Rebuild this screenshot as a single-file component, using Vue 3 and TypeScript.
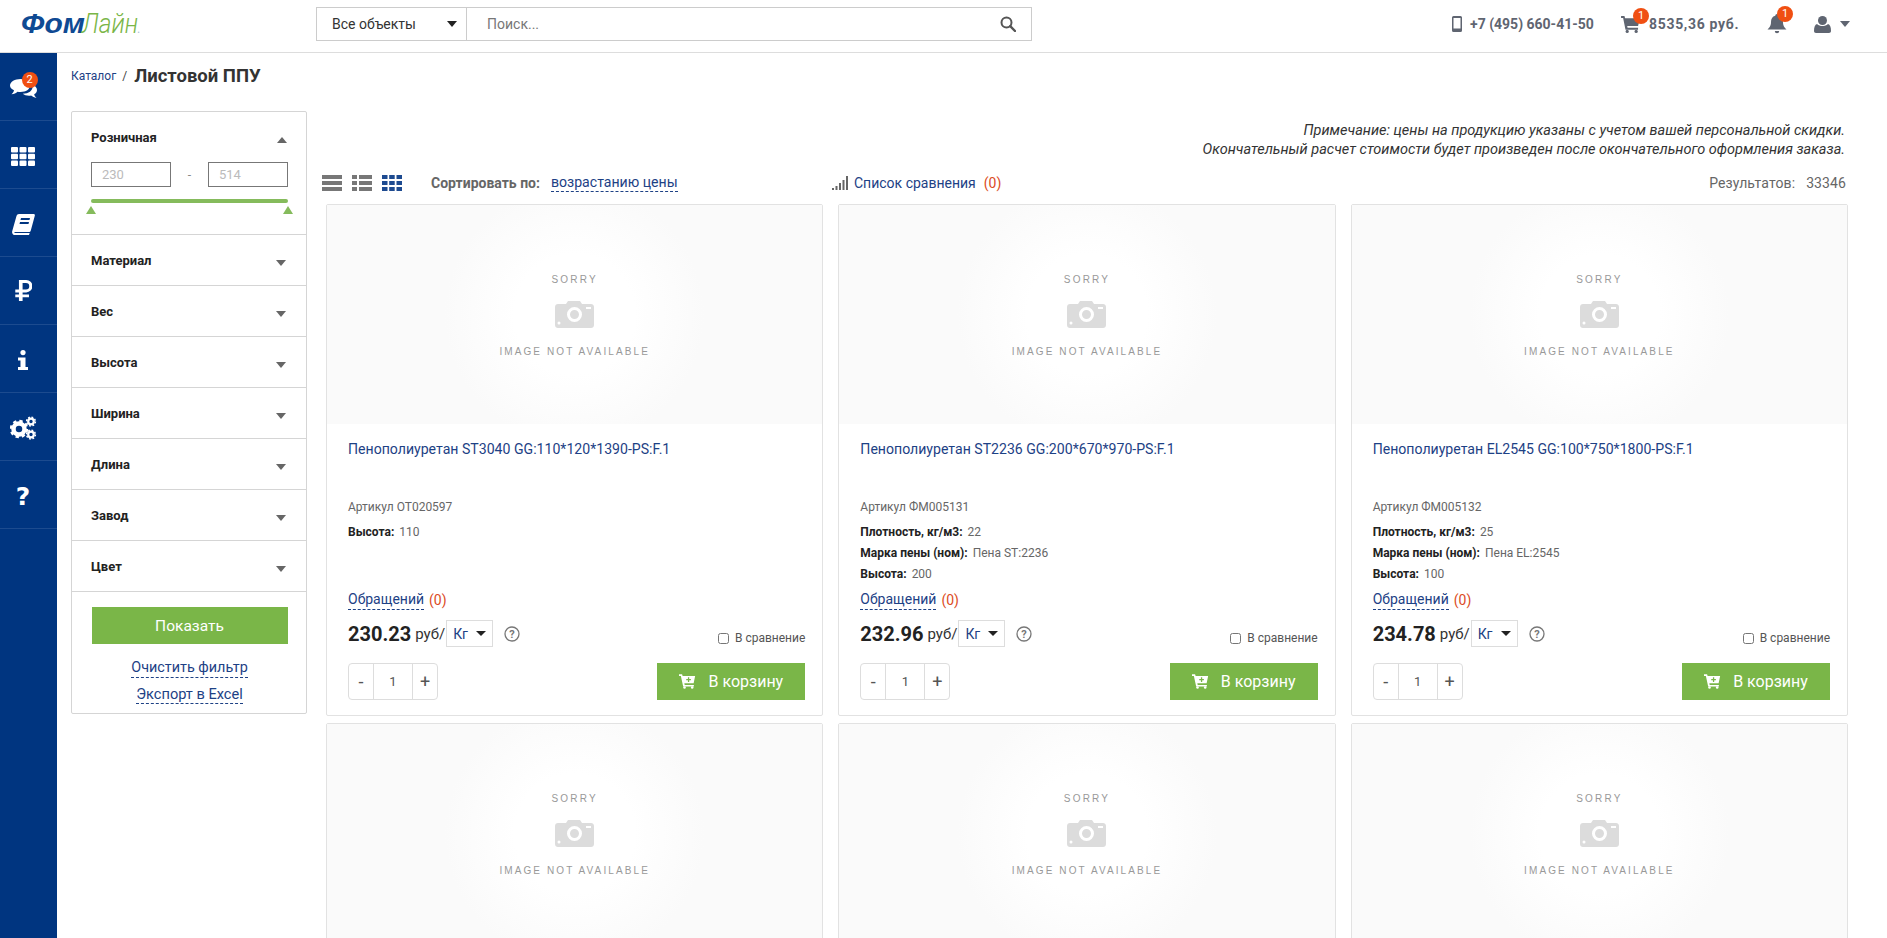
<script setup lang="ts">
interface Spec { label: string; value: string }
interface Product { title: string; sku: string; specs: Spec[]; price: string }

const filters: string[] = ['Материал', 'Вес', 'Высота', 'Ширина', 'Длина', 'Завод', 'Цвет']
const products: Product[] = [
  { title: 'Пенополиуретан ST3040 GG:110*120*1390-PS:F.1', sku: 'Артикул ОТ020597', price: '230.23',
    specs: [{ label: 'Высота:', value: '110' }] },
  { title: 'Пенополиуретан ST2236 GG:200*670*970-PS:F.1', sku: 'Артикул ФМ005131', price: '232.96',
    specs: [{ label: 'Плотность, кг/м3:', value: '22' }, { label: 'Марка пены (ном):', value: 'Пена ST:2236' }, { label: 'Высота:', value: '200' }] },
  { title: 'Пенополиуретан EL2545 GG:100*750*1800-PS:F.1', sku: 'Артикул ФМ005132', price: '234.78',
    specs: [{ label: 'Плотность, кг/м3:', value: '25' }, { label: 'Марка пены (ном):', value: 'Пена EL:2545' }, { label: 'Высота:', value: '100' }] }
]
const placeholders: number[] = [1, 2, 3]
</script>

<template>
  <div class="page">
    <header class="topbar">
      <div class="logo"><span class="logo-a">Фом</span><span class="logo-b">Лайн</span><span class="logo-dot">.</span></div>
      <div class="search">
        <div class="search-select"><span>Все объекты</span><i class="caret dark"></i></div>
        <input class="search-input" placeholder="Поиск..." />
        <svg class="search-icon" viewBox="0 0 16 16"><circle cx="6.5" cy="6.5" r="5" fill="none" stroke="#555" stroke-width="2" /><path d="M10.2 10.2 15 15" stroke="#555" stroke-width="2.4" stroke-linecap="round" /></svg>
      </div>
      <div class="top-right">
        <svg class="ic-phone" viewBox="0 0 10 16"><path fill-rule="evenodd" d="M1.5 0h7A1.5 1.5 0 0 1 10 1.5v13A1.5 1.5 0 0 1 8.500 16h-7A1.500 1.500 0 0 1 0 14.500v-13A1.500 1.500 0 0 1 1.500 0zM1.500 2v10.500h7V2z" fill="#5f6571" /></svg>
        <span class="tel">+7 (495) 660-41-50</span>
        <span class="icon-wrap cart">
          <svg viewBox="0 0 20 18"><path d="M0 0h3.600l.7 2.500H20l-2 8H6.500l.4 2H18v2H4.700L2.200 2H0z" fill="#5f6571" /><circle cx="6.500" cy="16.300" r="1.700" fill="#5f6571" /><circle cx="16" cy="16.300" r="1.700" fill="#5f6571" /></svg>
          <b class="badge">1</b>
        </span>
        <span class="sum">8535,36 руб.</span>
        <span class="icon-wrap bell">
          <svg viewBox="0 0 20 20"><path d="M10 0a1.700 1.700 0 0 1 1.700 1.800C14.700 2.500 16 5 16 8c0 4 1.500 5.500 3.500 7.500H.5C2.500 13.500 4 12 4 8c0-3 1.300-5.500 4.300-6.200A1.700 1.700 0 0 1 10 0zM7.800 17h4.400a2.200 2.200 0 0 1-4.400 0z" fill="#5f6571" /></svg>
          <b class="badge">1</b>
        </span>
        <svg class="ic-user" viewBox="0 0 17 17"><circle cx="8.500" cy="4.500" r="4.500" fill="#5f6571" /><path d="M3 8c1.500 1.500 3.500 2 5.500 2S12.500 9.500 14 8c2 .5 3 3 3 7 0 1.300-.8 2-2 2H2c-1.200 0-2-.7-2-2 0-4 1-6.500 3-7z" fill="#5f6571" /></svg>
        <i class="caret grey"></i>
      </div>
    </header>

    <div class="body">
      <nav class="sidenav">
        <div class="nav-item first">
          <span class="nav-chat">
            <svg viewBox="0 0 27 20" width="27" height="20"><path d="M10.500 1C16 1 20 3.800 20 7.500S16 14 10.500 14c-1 0-2-.1-3-.3C6 15 4 16 1.500 16.300 3 15 3.800 13.800 4 12.300 1.500 11.200 0 9.500 0 7.500 0 3.800 5 1 10.500 1z" fill="#fff" /><path d="M22 6.500c3 1 5 3 5 5.500 0 1.800-1 3.300-2.800 4.300.2 1.300 1 2.500 2.300 3.700-2.200-.3-4-1.200-5.400-2.400-.8.100-1.300.2-2.100.2-2.500 0-4.800-.7-6.300-2 6 0 10-3 10-7.500z" fill="#fff" /></svg>
            <b class="badge nav-badge">2</b>
          </span>
        </div>
        <div class="nav-item">
          <svg viewBox="0 0 24 19" width="24" height="19"><g fill="#fff"><rect x="0" y="0" width="7" height="5.400" rx="1" /><rect x="8.500" y="0" width="7" height="5.400" rx="1" /><rect x="17" y="0" width="7" height="5.400" rx="1" /><rect x="0" y="6.800" width="7" height="5.400" rx="1" /><rect x="8.500" y="6.800" width="7" height="5.400" rx="1" /><rect x="17" y="6.800" width="7" height="5.400" rx="1" /><rect x="0" y="13.600" width="7" height="5.400" rx="1" /><rect x="8.500" y="13.600" width="7" height="5.400" rx="1" /><rect x="17" y="13.600" width="7" height="5.400" rx="1" /></g></svg>
        </div>
        <div class="nav-item">
          <svg viewBox="0 0 23 21" width="23" height="21"><path fill-rule="evenodd" d="M7 0h14.500c1 0 1.600.8 1.300 1.800l-4 14.700c-.3 1-1 1.500-2 1.500H3.500c-1 0-1.300.6-1.100 1h15.300L17 21H3c-2 0-3.300-1.700-2.800-3.700L4.500 2C4.800.8 5.800 0 7 0zm2 4-.5 2h9l.5-2zm-1 4-.5 2h9l.5-2z" fill="#fff" /></svg>
        </div>
        <div class="nav-item ruble">
          <svg viewBox="0 0 18 23" width="17" height="21"><path fill-rule="evenodd" d="M4 0h8a6.800 6.800 0 0 1 0 13.600H8v2.400h7v3H8v4H4v-4H0v-3h4v-2.400H0v-3.200h4zm4 3.200v7.200h3.700a3.600 3.600 0 0 0 0-7.200z" fill="#fff" /></svg>
        </div>
        <div class="nav-item">
          <svg viewBox="0 0 10 20" width="10" height="20"><circle cx="5" cy="2.600" r="2.600" fill="#fff" /><path d="M0 7.500h7.500V17H10v3H0v-3h2.500v-6.500H0z" fill="#fff" /></svg>
        </div>
        <div class="nav-item">
          <svg viewBox="0 0 27 24" width="27" height="24">
            <circle cx="9" cy="13" r="5.500" fill="none" stroke="#fff" stroke-width="4.500" />
            <circle cx="9" cy="13" r="8" fill="none" stroke="#fff" stroke-width="2.500" stroke-dasharray="3.300 3" />
            <circle cx="21" cy="5.500" r="2.800" fill="none" stroke="#fff" stroke-width="2.200" />
            <circle cx="21" cy="5.500" r="4.400" fill="none" stroke="#fff" stroke-width="1.500" stroke-dasharray="1.800 1.650" />
            <circle cx="21" cy="18.500" r="2.800" fill="none" stroke="#fff" stroke-width="2.200" />
            <circle cx="21" cy="18.500" r="4.400" fill="none" stroke="#fff" stroke-width="1.500" stroke-dasharray="1.800 1.650" />
          </svg>
        </div>
        <div class="nav-item"><span class="nav-q">?</span></div>
      </nav>

      <main class="main">
        <div class="crumbs"><a class="crumb">Каталог</a><span class="sep">/</span><h1 class="title">Листовой ППУ</h1></div>
        <div class="columns">
          <aside class="filter">
            <section class="f-open">
              <div class="f-head"><span>Розничная</span><i class="tri up"></i></div>
              <div class="range">
                <input class="range-in" placeholder="230" />
                <span class="dash">-</span>
                <input class="range-in" placeholder="514" />
              </div>
              <div class="slider"><i class="handle left"></i><i class="handle right"></i></div>
            </section>
            <section v-for="f in filters" :key="f" class="f-row"><span>{{ f }}</span><i class="tri down"></i></section>
            <div class="f-actions">
              <button class="show">Показать</button>
              <a class="dash-link clear">Очистить фильтр</a>
              <a class="dash-link excel">Экспорт в Excel</a>
            </div>
          </aside>

          <div class="content">
            <div class="note">
              <div>Примечание: цены на продукцию указаны с учетом вашей персональной скидки.</div>
              <div>Окончательный расчет стоимости будет произведен после окончательного оформления заказа.</div>
            </div>
            <div class="toolbar">
              <div class="views">
                <svg viewBox="0 0 20 16" width="20" height="16"><g fill="#777"><rect width="20" height="4" /><rect y="6" width="20" height="4" /><rect y="12" width="20" height="4" /></g></svg>
                <svg viewBox="0 0 20 16" width="20" height="16"><g fill="#777"><rect width="5" height="4" /><rect x="7" width="13" height="4" /><rect y="6" width="5" height="4" /><rect x="7" y="6" width="13" height="4" /><rect y="12" width="5" height="4" /><rect x="7" y="12" width="13" height="4" /></g></svg>
                <svg viewBox="0 0 20 16" width="20" height="16"><g fill="#1d4a90"><rect width="5.500" height="4" /><rect x="7.200" width="5.500" height="4" /><rect x="14.500" width="5.500" height="4" /><rect y="6" width="5.500" height="4" /><rect x="7.200" y="6" width="5.500" height="4" /><rect x="14.500" y="6" width="5.500" height="4" /><rect y="12" width="5.500" height="4" /><rect x="7.200" y="12" width="5.500" height="4" /><rect x="14.500" y="12" width="5.500" height="4" /></g></svg>
              </div>
              <div class="sort"><b>Сортировать по:</b><a class="dash-link">возрастанию цены</a></div>
              <div class="compare">
                <svg viewBox="0 0 16 14" width="16" height="14"><g fill="#666"><rect x="0" y="12" width="2" height="2" /><rect x="3.500" y="10" width="2" height="4" /><rect x="7" y="7" width="2" height="7" /><rect x="10.500" y="4" width="2" height="10" /><rect x="14" y="0" width="2" height="14" /></g></svg>
                <a class="link">Список сравнения</a><span class="count">(0)</span>
              </div>
              <div class="results"><span>Результатов:</span><span>33346</span></div>
            </div>

            <div class="grid">
              <article v-for="p in products" :key="p.sku" class="card">
                <div class="noimg">
                  <span class="ni-top">SORRY</span>
                  <svg class="ni-cam" viewBox="0 0 39 27"><path fill-rule="evenodd" d="M3 3h8l2-3h12l2 3h9c1.700 0 3 1.300 3 3v18c0 1.700-1.300 3-3 3H3c-1.700 0-3-1.300-3-3V6c0-1.700 1.300-3 3-3zm16.500 3a7.500 7.500 0 1 0 0 15 7.500 7.500 0 0 0 0-15zm0 3a4.500 4.500 0 1 1 0 9 4.500 4.500 0 0 1 0-9z" fill="#dcdcdc" /><rect x="31" y="6" width="5" height="2" fill="#fff" /><circle cx="4" cy="22" r="1.500" fill="#fff" /></svg>
                  <span class="ni-bot">IMAGE NOT AVAILABLE</span>
                </div>
                <div class="card-body">
                  <a class="p-title">{{ p.title }}</a>
                  <div class="sku">{{ p.sku }}</div>
                  <div class="specs">
                    <div v-for="s in p.specs" :key="s.label" class="spec"><b>{{ s.label }}</b><span>{{ s.value }}</span></div>
                  </div>
                  <div class="appeals"><a class="dash-link">Обращений</a><span class="count">(0)</span></div>
                  <div class="price-row">
                    <strong class="price">{{ p.price }}</strong>
                    <span class="per">руб/</span>
                    <div class="unit"><span>Кг</span><i class="caret dark small"></i></div>
                    <svg class="help" viewBox="0 0 16 16" width="16" height="16"><circle cx="8" cy="8" r="7" fill="none" stroke="#777" stroke-width="1.300" /><text x="8" y="11.800" text-anchor="middle" class="help-q">?</text></svg>
                    <label class="cmp"><input type="checkbox" /><span>В сравнение</span></label>
                  </div>
                  <div class="buy-row">
                    <div class="qty"><span class="q-btn">-</span><span class="q-val">1</span><span class="q-btn">+</span></div>
                    <button class="buy">
                      <svg viewBox="0 0 20 17" width="17" height="15"><path fill-rule="evenodd" d="M0 0h3.600l.7 2H19l-1.800 8.500H6.300l.4 2H17.500v2H4.900L2.200 2H0zM10.500 3.500v2h-2v1.500h2v2H12V7h2V5.500h-2v-2z" fill="#fff" /><circle cx="6.500" cy="15.500" r="1.500" fill="#fff" /><circle cx="15.500" cy="15.500" r="1.500" fill="#fff" /></svg>
                      <span>В корзину</span>
                    </button>
                  </div>
                </div>
              </article>
              <article v-for="n in placeholders" :key="n" class="card">
                <div class="noimg">
                  <span class="ni-top">SORRY</span>
                  <svg class="ni-cam" viewBox="0 0 39 27"><path fill-rule="evenodd" d="M3 3h8l2-3h12l2 3h9c1.700 0 3 1.300 3 3v18c0 1.700-1.300 3-3 3H3c-1.700 0-3-1.300-3-3V6c0-1.700 1.300-3 3-3zm16.500 3a7.500 7.500 0 1 0 0 15 7.500 7.500 0 0 0 0-15zm0 3a4.500 4.500 0 1 1 0 9 4.500 4.500 0 0 1 0-9z" fill="#dcdcdc" /><rect x="31" y="6" width="5" height="2" fill="#fff" /><circle cx="4" cy="22" r="1.500" fill="#fff" /></svg>
                  <span class="ni-bot">IMAGE NOT AVAILABLE</span>
                </div>
              </article>
            </div>
          </div>
        </div>
      </main>
    </div>
  </div>
</template>

<style>
html, body { margin: 0; padding: 0; background: #fff; overflow: hidden; }
</style>

<style scoped>
* { box-sizing: border-box; }
.page { height: 938px; overflow: hidden; font-family: Roboto, "Noto Sans", sans-serif; color: #333; font-size: 14px; display: flex; flex-direction: column; }
a { cursor: pointer; }

/* top bar */
.topbar { height: 53px; flex: none; border-bottom: 1px solid #ddd; display: flex; align-items: center; position: relative; }
.logo { width: 316px; padding-left: 21px; font-style: italic; font-size: 28px; line-height: 1; white-space: nowrap; margin-top: -5px; display: flex; align-items: baseline; }
.logo-a { width: 61px; font-family: "Liberation Sans", sans-serif; font-weight: 700; color: #0f4a93; display: inline-block; transform: scaleX(1.07); transform-origin: left; }
.logo-b { width: 54px; font-family: Roboto, sans-serif; font-weight: 300; color: #7ab648; display: inline-block; transform: scaleX(.875); transform-origin: left; }
.logo-dot { color: #a9bfd6; font-size: 12px; margin-left: 1px; font-style: normal; }
.search { width: 716px; height: 34px; margin-top: -4px; border: 1px solid #ccc; display: flex; align-items: center; position: relative; }
.search-select { width: 150px; height: 100%; border-right: 1px solid #ccc; display: flex; align-items: center; padding-left: 15px; color: #333; font-size: 14px; position: relative; }
.search-select .caret { position: absolute; left: 130px; top: 13px; }
.search-input { flex: 1; border: 0; outline: 0; height: 100%; padding: 0 20px; font: 14px Roboto, sans-serif; background: transparent; }
.search-input::placeholder { color: #777; opacity: 1; }
.search-icon { position: absolute; right: 15px; top: 8px; width: 16px; height: 16px; }
.caret { display: inline-block; width: 0; height: 0; border-left: 5px solid transparent; border-right: 5px solid transparent; border-top: 6px solid #222; }
.caret.small { border-left-width: 5px; border-right-width: 5px; border-top-width: 5px; }
.caret.grey { border-top-color: #5f6571; margin-left: 9px; }
.top-right { margin-left: auto; margin-top: -4px; padding-right: 37px; display: flex; align-items: center; color: #5f6571; font-weight: 700; }
.ic-phone { width: 10px; height: 16px; margin-right: 8px; }
.tel { font-size: 14px; width: 151px; }
.icon-wrap { position: relative; display: inline-block; }
.icon-wrap svg { display: block; }
.cart svg { width: 19px; height: 17px; }
.sum { font-size: 14px; letter-spacing: .68px; margin-left: 9px; width: 118px; }
.bell svg { width: 20px; height: 20px; }
.ic-user { width: 17px; height: 17px; margin-left: 27px; }
.badge { position: absolute; width: 16px; height: 16px; line-height: 16px; border-radius: 50%; background: #f04f12; color: #fff; font-size: 11px; font-weight: 400; text-align: center; }
.cart .badge { right: -9px; top: -8px; }
.bell .badge { right: -6px; top: -8px; }

/* side nav */
.body { flex: 1; display: flex; min-height: 0; }
.sidenav { width: 57px; flex: none; background: #003580; display: flex; flex-direction: column; }
.nav-item { height: 68px; border-bottom: 1px solid #1c4b8f; padding: 3px 11px 0 0; display: flex; align-items: center; justify-content: center; flex: none; }
.nav-item svg { display: block; }
.nav-item.ruble { padding-top: 0; }
.nav-chat { position: relative; display: block; }
.nav-badge { left: 12px; top: -6px; }
.nav-q { color: #fff; font: 700 25px "DejaVu Sans", sans-serif; line-height: 1; }

/* main */
.main { flex: 1; padding: 0 39px 0 14px; min-width: 0; }
.crumbs { height: 58px; display: flex; align-items: flex-start; padding-top: 13px; line-height: 20px; }
.crumb { font-size: 12px; color: #1d4185; }
.sep { font-size: 12px; margin: 0 7px 0 6px; color: #444; }
.title { margin: 0; font-size: 18.5px; font-weight: 700; line-height: 20px; color: #333; }
.columns { display: flex; gap: 19px; align-items: flex-start; }

/* filter */
.filter { width: 236px; flex: none; border: 1px solid #d5d5d5; border-radius: 2px; font-size: 13px; color: #222; }
.f-open { height: 123px; border-bottom: 1px solid #d5d5d5; padding: 15px 18px 0 19px; }
.f-head { display: flex; justify-content: space-between; align-items: center; font-weight: 700; height: 20px; font-size: 13px; padding-right: 1px; }
.tri { display: inline-block; width: 0; height: 0; border-left: 5px solid transparent; border-right: 5px solid transparent; }
.tri.up { border-bottom: 6px solid #666; margin-top: 6px; }
.tri.down { border-top: 6px solid #666; margin-top: 6px; }
.range { display: flex; align-items: center; justify-content: space-between; margin-top: 15px; }
.range-in { width: 80px; height: 25px; border: 1px solid #777; padding: 0 10px; font: 13px Roboto, sans-serif; outline: 0; background: #fff; }
.range-in::placeholder { color: #bbb; opacity: 1; }
.dash { color: #888; font-size: 12px; }
.slider { height: 4px; background: #85bb5c; border-radius: 2px; margin-top: 12px; position: relative; }
.handle { position: absolute; top: 7px; width: 0; height: 0; border-left: 5px solid transparent; border-right: 5px solid transparent; border-bottom: 8px solid #85bb5c; }
.handle.left { left: -5px; }
.handle.right { right: -5px; }
.f-row { height: 51px; border-bottom: 1px solid #d5d5d5; padding: 0 20px 0 19px; display: flex; justify-content: space-between; align-items: center; font-weight: 700; }
.f-actions { display: flex; flex-direction: column; align-items: center; padding: 15px 18px 0 19px; height: 121px; }
.show { width: 196px; height: 37px; flex: none; border: 0; background: #7ab648; color: #fff; font: 15.5px Roboto, sans-serif; }
.dash-link { color: #1d4185; border-bottom: 1px dashed #1d4185; line-height: 18px; }
.clear { margin-top: 15px; font-size: 14.4px; }
.excel { margin-top: 7px; font-size: 14.6px; }

/* content */
.content { flex: 1; min-width: 0; }
.note { margin-top: 10px; text-align: right; font-style: italic; line-height: 19px; font-size: 14.5px; color: #333; padding-right: 3px; }
.toolbar { height: 45px; margin: 0 2px 0 -4px; padding-top: 2px; display: flex; align-items: center; font-size: 14px; }
.views { display: flex; gap: 10px; width: 109px; }
.views svg { display: block; }
.sort { width: 401px; color: #666; display: flex; align-items: center; gap: 11px; }
.sort b { font-weight: 700; }
.sort .dash-link { font-size: 14.1px; }
.compare { display: flex; align-items: center; }
.link { color: #1d4185; margin-left: 6px; }
.count { color: #dc4b24; margin-left: 8px; }
.results { margin-left: auto; color: #666; display: flex; gap: 11px; letter-spacing: .1px; }

/* cards */
.grid { display: grid; grid-template-columns: repeat(3, 1fr); gap: 7px 15px; }
.card { border: 1px solid #e2e2e2; border-radius: 2px; background: #fff; }
.noimg { height: 219px; background: radial-gradient(circle at 50% 50%, #fff 0, #fff 60px, #fafafa 130px); display: flex; flex-direction: column; align-items: center; font-family: "Liberation Sans", sans-serif; color: #999; font-size: 10px; }
.ni-top { margin-top: 69px; letter-spacing: 2.2px; line-height: 12px; }
.ni-cam { width: 39px; height: 27px; margin-top: 15px; display: block; }
.ni-bot { margin-top: 18px; letter-spacing: 2.1px; line-height: 12px; }
.card-body { padding: 15px 17px 15px 21px; }
.p-title { display: block; height: 58px; line-height: 20px; font-size: 14.1px; color: #1d4185; }
.sku { font-size: 12px; color: #666; line-height: 20px; }
.specs { margin-top: 5px; height: 63px; }
.spec { font-size: 12px; line-height: 21px; display: flex; gap: 5px; color: #666; }
.spec b { color: #222; font-weight: 700; }
.appeals { margin-top: 5px; height: 20px; line-height: 20px; font-size: 14px; display: flex; }
.appeals .dash-link { line-height: 19px; height: 20px; }
.appeals .count { margin-left: 5px; }
.price-row { margin-top: 10px; height: 27px; display: flex; align-items: center; }
.price { font-size: 20px; font-weight: 700; color: #222; }
.per { font-size: 15px; margin-left: 4px; color: #333; }
.unit { width: 47px; height: 27px; border: 1px solid #ddd; margin-left: 1px; display: flex; align-items: center; justify-content: space-between; padding: 0 6px; color: #1d4185; font-size: 14px; }
.help { margin-left: 11px; display: block; }
.help-q { font: 700 11px Roboto, sans-serif; fill: #777; }
.cmp { margin-left: auto; display: flex; align-items: center; font-size: 12px; color: #555; margin-top: 9px; }
.cmp input { margin: 0 6px 0 0; width: 11px; height: 11px; }
.buy-row { margin-top: 16px; display: flex; justify-content: space-between; }
.qty { width: 90px; height: 37px; border: 1px solid #ddd; border-radius: 4px; display: flex; align-items: stretch; color: #555; }
.q-btn { width: 24px; display: flex; align-items: center; justify-content: center; font-size: 18px; }
.q-val { flex: 1; border-left: 1px solid #ddd; border-right: 1px solid #ddd; display: flex; align-items: center; justify-content: center; font-size: 13px; }
.buy { width: 148px; height: 37px; border: 0; background: #7ab648; color: #fff; font: 16px Roboto, sans-serif; display: flex; align-items: center; justify-content: center; gap: 12px; }
</style>
